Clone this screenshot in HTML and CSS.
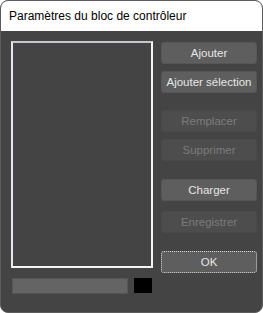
FILE: index.html
```html
<!DOCTYPE html>
<html>
<head>
<meta charset="utf-8">
<link rel="stylesheet" href="styles.css">
</head>
<body>
<div class="window">
  <div class="titlebar">Paramètres du bloc de contrôleur</div>
  <div class="content">
    <div class="left">
      <div class="listbox"></div>
      <div class="bottom">
        <div class="bar"></div>
        <div class="swatch"></div>
      </div>
    </div>
    <div class="buttons">
      <button class="btn">Ajouter</button>
      <button class="btn">Ajouter sélection</button>
      <button class="btn disabled sep">Remplacer</button>
      <button class="btn disabled">Supprimer</button>
      <button class="btn sep2">Charger</button>
      <button class="btn disabled small">Enregistrer</button>
      <button class="btn ok sep2">OK</button>
    </div>
  </div>
</div>
</body>
</html>
```
FILE: styles.css
```css
html, body {
  margin: 0;
  padding: 0;
  background: #ffffff;
}
.window {
  width: 263px;
  height: 313px;
  box-sizing: border-box;
  border: 1px solid #5c5c5c;
  border-radius: 8px;
  overflow: hidden;
  background: #444444;
  display: flex;
  flex-direction: column;
  font-family: "Liberation Sans", Arial, sans-serif;
}
.titlebar {
  height: 30px;
  background: #ffffff;
  color: #000000;
  font-size: 12px;
  line-height: 31px;
  padding-left: 8px;
  flex: none;
}
.content {
  display: flex;
  padding: 10px 5px 0 10px;
  gap: 8px;
}
.left {
  display: flex;
  flex-direction: column;
}
.listbox {
  width: 138px;
  height: 223px;
  border: 2px solid #f4f4f4;
  border-top-color: #c8c8cc;
  border-left-color: #e8e8ec;
}
.bottom {
  display: flex;
  margin-top: 10px;
  padding-left: 1px;
  gap: 6px;
}
.bar {
  width: 114px;
  height: 14px;
  background: #646464;
  border: 1px solid #555555;
}
.swatch {
  width: 18px;
  height: 15px;
  background: #000000;
}
.buttons {
  display: flex;
  flex-direction: column;
  gap: 7px;
  padding-top: 1px;
}
.btn {
  width: 96px;
  height: 22px;
  box-sizing: border-box;
  background: #5e5e5e;
  border: 1px solid #565656;
  border-radius: 3px;
  color: #e6e6e6;
  font-family: "Liberation Sans", Arial, sans-serif;
  font-size: 11.5px;
  padding: 0;
  line-height: 19px;
}
.btn.disabled {
  background: #4d4d4d;
  border-color: #4a4a4a;
  color: #7c7c7c;
}
.btn.sep {
  margin-top: 10px;
}
.btn.sep2 {
  margin-top: 11px;
}
.btn.small {
  margin-top: 3px;
}
.btn.ok {
  border: 1px dotted #d8d8d8;
}
```
